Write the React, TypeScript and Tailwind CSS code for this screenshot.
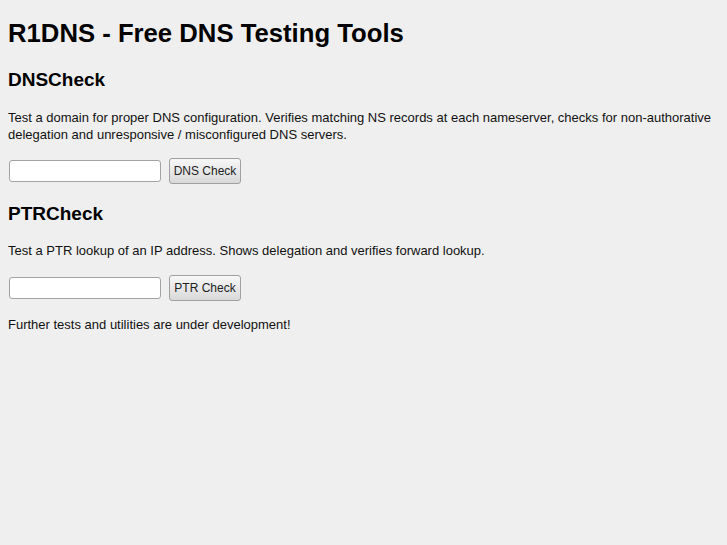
export default function App() {
  return (
    <div className="min-h-[545px] bg-[#efefef] px-2 pt-px text-[#111] [font-family:'Liberation_Sans',Arial,sans-serif]">
      <h1 className="mt-[18px] text-[25.7px] leading-[28px] font-bold text-black">
        R1DNS - Free DNS Testing Tools
      </h1>

      <h2 className="mt-[22px] text-[19px] leading-[22px] font-bold text-black">DNSCheck</h2>
      <p className="mt-[18px] text-[13px] leading-[17px]">
        Test a domain for proper DNS configuration. Verifies matching NS records at each nameserver, checks for
        non-authorative delegation and unresponsive / misconfigured DNS servers.
      </p>
      <form className="mt-[15px] flex items-center gap-2" onSubmit={(e) => e.preventDefault()}>
        <input
          type="text"
          className="ml-px h-[22px] w-[152px] rounded-[3px] border border-[#a3a3a3] bg-white px-1 text-[13px] outline-none"
        />
        <button
          type="submit"
          className="h-[26px] w-[72px] rounded-[3px] border border-[#a0a0a0] bg-gradient-to-b from-[#f7f7f7] to-[#d9d9d9] text-[12px] text-[#222]"
        >
          DNS Check
        </button>
      </form>

      <h2 className="mt-[19px] text-[19px] leading-[22px] font-bold text-black">PTRCheck</h2>
      <p className="mt-[17px] text-[13px] leading-[17px]">
        Test a PTR lookup of an IP address. Shows delegation and verifies forward lookup.
      </p>
      <form className="mt-4 flex items-center gap-2" onSubmit={(e) => e.preventDefault()}>
        <input
          type="text"
          className="ml-px h-[22px] w-[152px] rounded-[3px] border border-[#a3a3a3] bg-white px-1 text-[13px] outline-none"
        />
        <button
          type="submit"
          className="h-[26px] w-[72px] rounded-[3px] border border-[#a0a0a0] bg-gradient-to-b from-[#f7f7f7] to-[#d9d9d9] text-[12px] text-[#222]"
        >
          PTR Check
        </button>
      </form>

      <p className="mt-[15px] text-[13px] leading-[17px]">Further tests and utilities are under development!</p>
    </div>
  )
}
